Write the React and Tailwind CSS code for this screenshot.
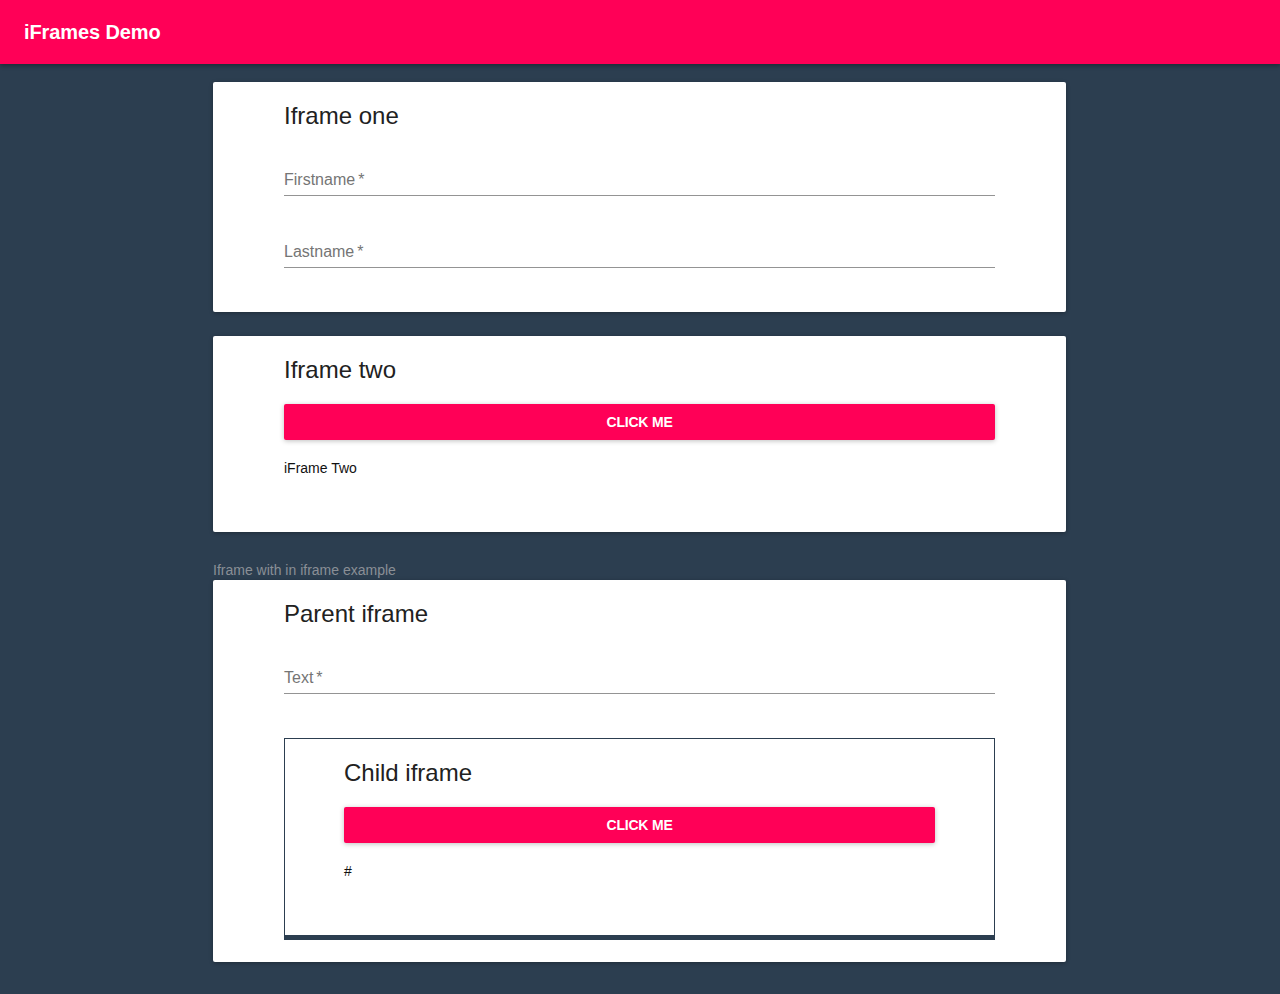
import React from 'react'

function Field({ label }) {
  return (
    <div className="mt-4 mb-2 h-[48px] flex flex-col justify-end">
      <span className="pb-[5px] text-[16px] leading-5 text-[#757575]">
        {label}<span className="ml-[3px]">*</span>
      </span>
      <div className="h-px bg-[#949494]" />
    </div>
  )
}

function ClickPanel({ title, note, inset }) {
  return (
    <div className={inset + ' pt-[18px] pb-[54px]'}>
      <h2 className="text-[24px] leading-8 text-[#212121]">{title}</h2>
      <button className="mt-[18px] h-9 w-full rounded-[2px] bg-[#ff0057] text-[14px] font-bold uppercase tracking-[-0.2px] text-white shadow-[0_1px_5px_rgba(0,0,0,0.25)]">
        Click me
      </button>
      <p className="mt-[18px] text-[14px] leading-5 text-[#111]">{note}</p>
    </div>
  )
}

export default function App() {
  return (
    <div className="min-h-[994px] bg-[#2c3e50] font-['Liberation_Sans',Arial,sans-serif]">
      <header className="h-16 bg-[#ff0057] flex items-center px-6 shadow-[0_2px_4px_rgba(0,0,0,0.3)]">
        <h1 className="text-[20px] font-bold tracking-[-0.1px] text-white">iFrames Demo</h1>
      </header>

      <main className="w-[853px] ml-[213px] pt-[18px] pb-8">
        <section className="rounded-[2px] bg-white shadow-[0_1px_4px_rgba(0,0,0,0.3)]">
          <div className="flex flex-col px-[71px] pt-[18px] pb-[36px]">
            <h2 className="text-[24px] leading-8 text-[#212121]">Iframe one</h2>
            <Field label="Firstname" />
            <Field label="Lastname" />
          </div>
        </section>

        <section className="mt-6 rounded-[2px] bg-white shadow-[0_1px_4px_rgba(0,0,0,0.3)]">
          <ClickPanel title="Iframe two" note="iFrame Two" inset="px-[71px]" />
        </section>

        <p className="mt-[29px] text-[14px] leading-[18px] text-[#8a8f96]">Iframe with in iframe example</p>

        <section className="mt-px rounded-[2px] bg-white shadow-[0_1px_4px_rgba(0,0,0,0.3)]">
          <div className="flex flex-col px-[71px] pt-[18px] pb-[22px]">
            <h2 className="text-[24px] leading-8 text-[#212121]">Parent iframe</h2>
            <Field label="Text" />
            <div className="mt-9 border border-b-[5px] border-[#2c3e50]">
              <ClickPanel title="Child iframe" note="#" inset="px-[59px]" />
            </div>
          </div>
        </section>
      </main>
    </div>
  )
}
